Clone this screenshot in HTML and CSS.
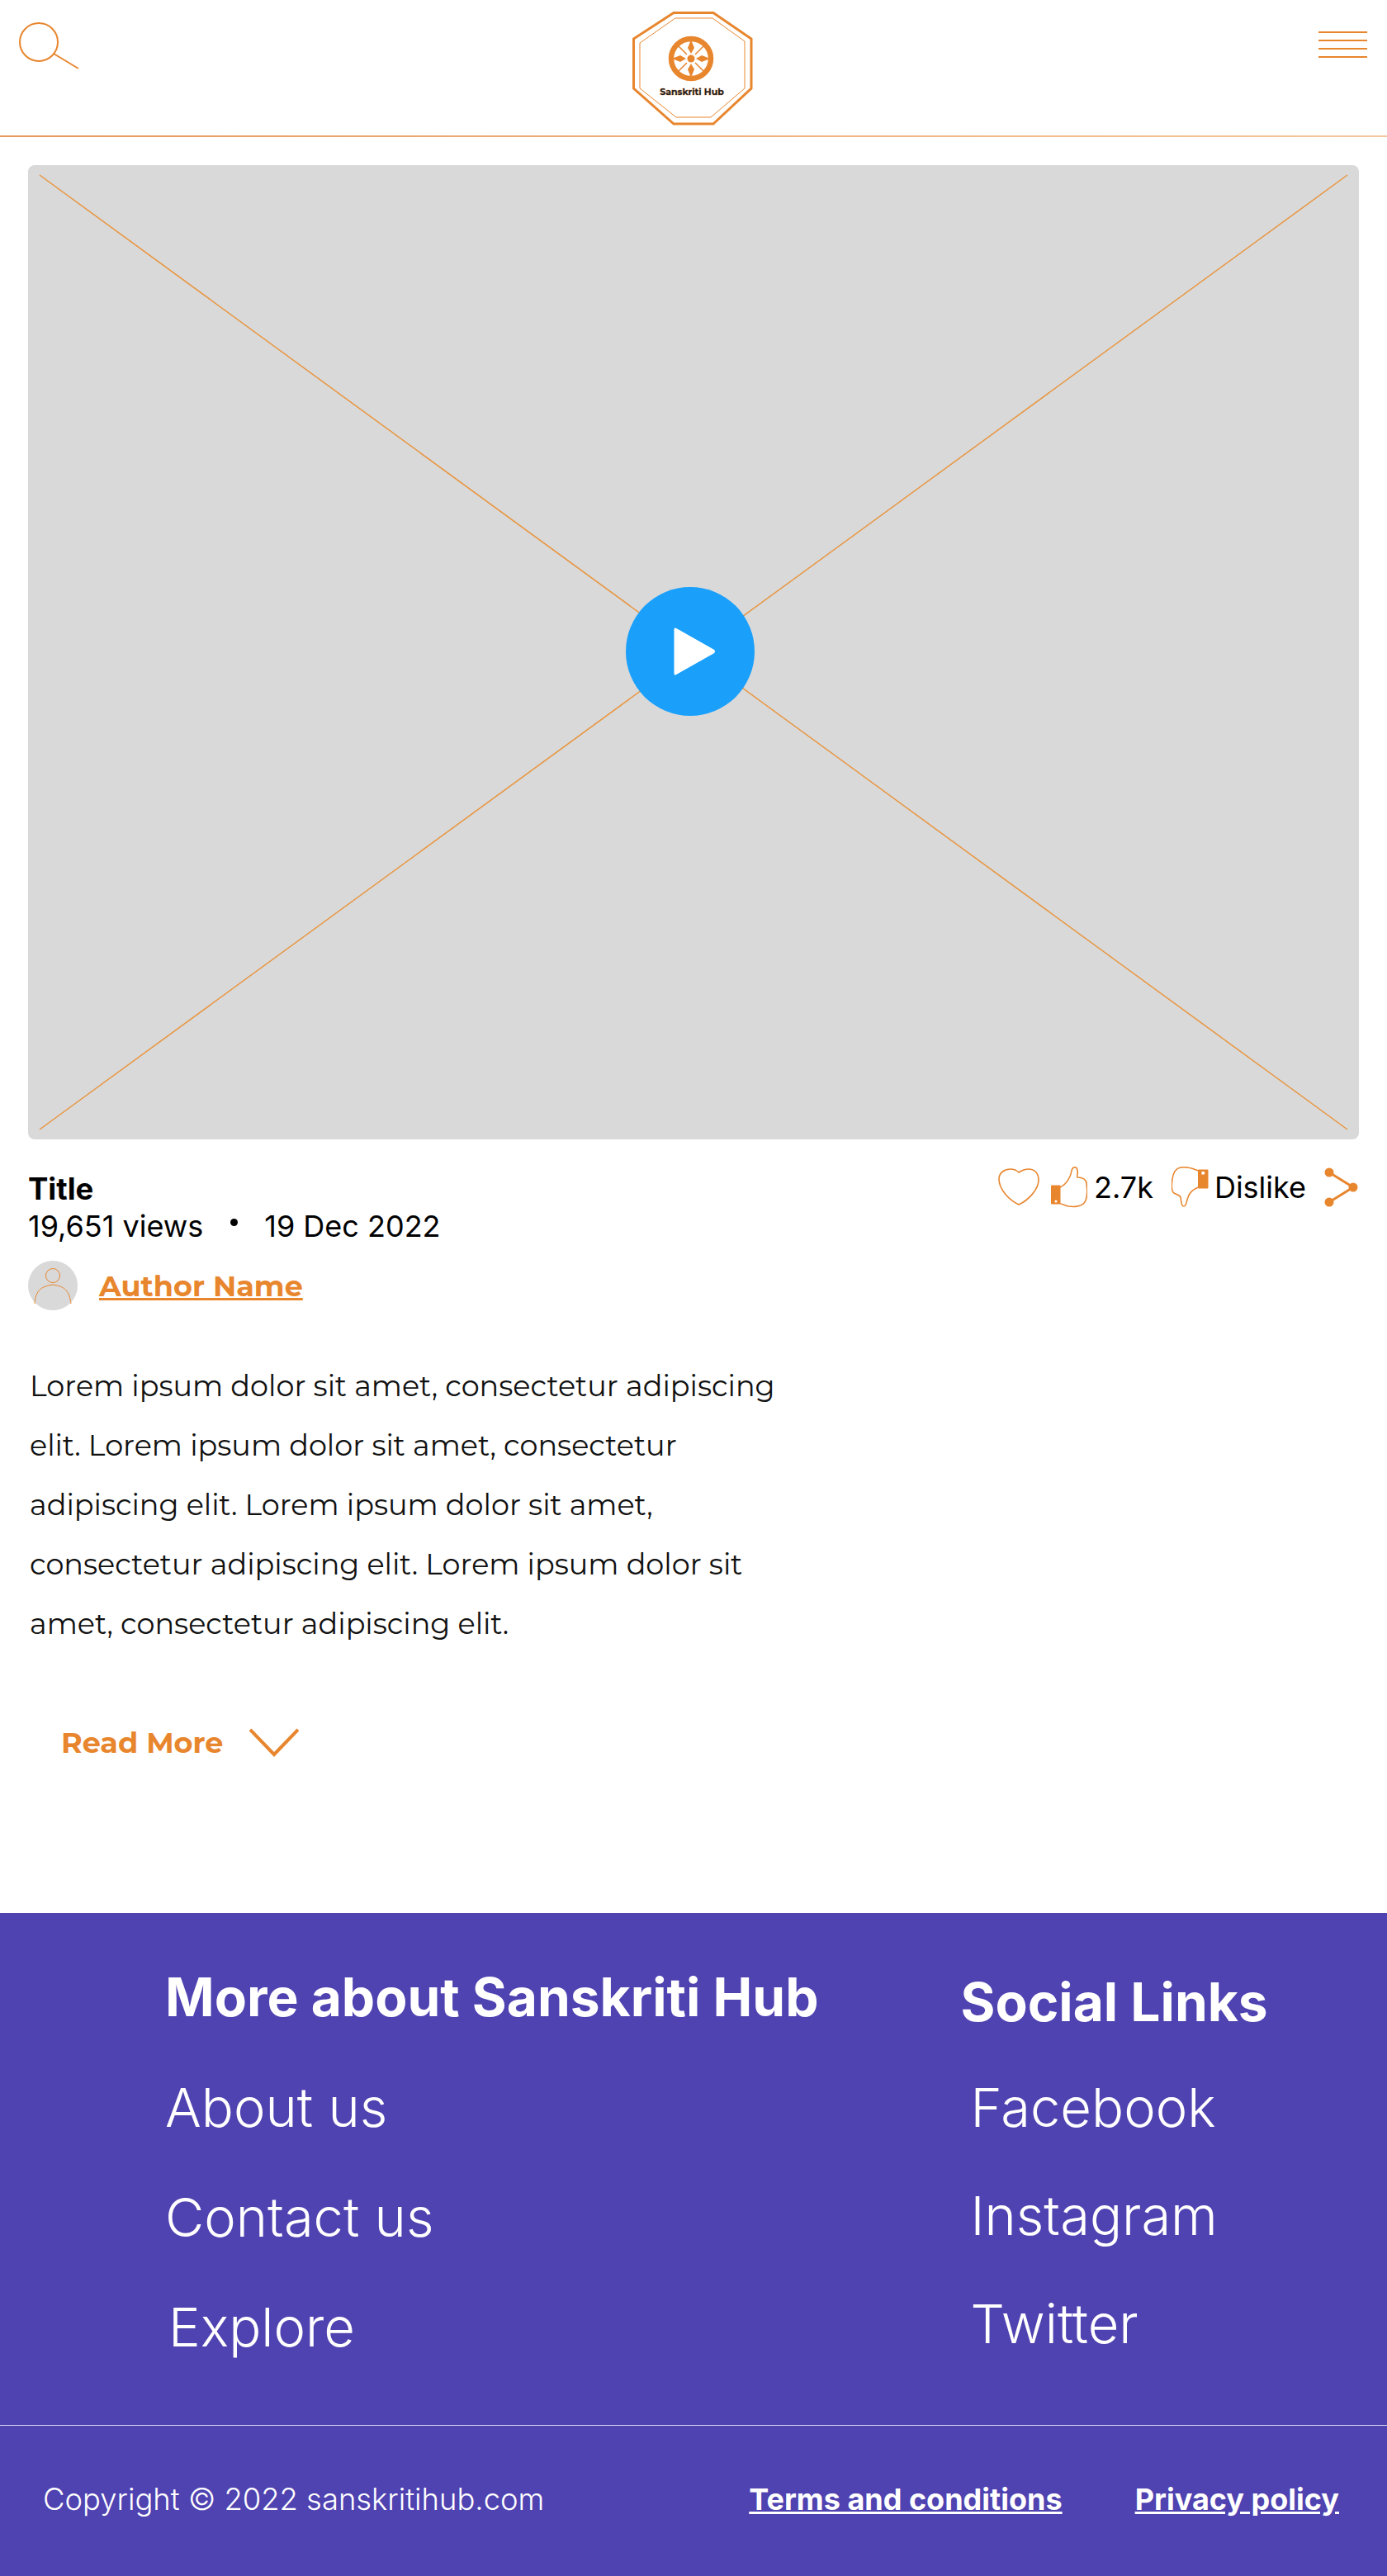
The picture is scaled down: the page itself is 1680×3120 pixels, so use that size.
FILE: index.html
```html
<!DOCTYPE html>
<html lang="en">
<head>
  <meta charset="UTF-8" />
  <meta name="viewport" content="width=device-width, initial-scale=1" />
  <title>Sanskriti Hub</title>
  <link rel="stylesheet" href="styles.css">
</head>
<body>
  <header class="site-header">
    <svg class="search-icon" viewBox="0 0 74 58" fill="none" stroke="#e8862e" stroke-width="2">
      <circle cx="24" cy="24" r="23" />
      <path d="M42 38 L72 56" />
    </svg>
    <svg class="logo" viewBox="0 0 146 138" fill="none" stroke="#e8862e">
      <path d="M50 1.5 H98 L144 33 V93 L98 136 H50 L1.5 93 V33 Z" stroke-width="3" />
      <path d="M52 8 H97 L136 36 V93 L95 128 H53 L9 93 V38 Z" stroke-width="1" />
      <circle cx="71" cy="57" r="24" stroke-width="6.5" />
      <circle cx="71" cy="57" r="4.5" fill="#e8862e" stroke="none" />
      <g fill="#e8862e" stroke="none">
        <path d="M71 34 L75 44 L71 51 L67 44 Z" />
        <path d="M71 80 L75 70 L71 63 L67 70 Z" />
        <path d="M48 57 L58 53 L65 57 L58 61 Z" />
        <path d="M94 57 L84 53 L77 57 L84 61 Z" />
      </g>
      <path d="M54 40 L66 52 M88 40 L76 52 M54 74 L66 62 M88 74 L76 62" stroke-width="1.5" />
      <text class="logo-text" x="72" y="101" text-anchor="middle">Sanskriti Hub</text>
    </svg>
    <div class="menu-icon">
      <span></span><span></span><span></span><span></span>
    </div>
  </header>

  <main class="content">
    <div class="video">
      <svg class="video-lines" viewBox="0 0 1612 1180" preserveAspectRatio="none" fill="none" stroke="#e8953f" stroke-width="1.5">
        <path d="M14 12 L1598 1168" />
        <path d="M1598 12 L14 1168" />
      </svg>
      <div class="play-button">
        <svg viewBox="0 0 52 60" width="52" height="60">
          <path d="M3 3 L49 29 Q50 30 49 31 L3 57 Z" fill="#fff" stroke="#fff" stroke-width="3" stroke-linejoin="round" />
        </svg>
      </div>
    </div>

    <div class="video-meta">
      <div class="video-info">
        <h1 class="video-title">Title</h1>
        <p class="video-stats">
          <span>19,651 views</span>
          <span class="dot"></span>
          <span>19 Dec 2022</span>
        </p>
        <div class="author">
          <svg class="avatar" viewBox="0 0 60 60" fill="none" stroke="#e8862e" stroke-width="1">
            <circle cx="30" cy="30" r="30" fill="#d9d9d9" stroke="none" />
            <circle cx="30" cy="18" r="8.5" />
            <path d="M8 52 C9 38 14 31 30 29 C46 31 50 38 52 52" />
          </svg>
          <a class="author-name" href="#">Author Name</a>
        </div>
      </div>
      <div class="video-actions">
        <svg class="icon-heart" viewBox="0 0 50 46" fill="none" stroke="#e8862e" stroke-width="1.6">
          <path d="M25 44 C14 39 1 26 1 13 C1 5 8 1 15 1 C19 1 23 3 25 5 C28 3 33 1 37 1 C44 1 49 6 49 14 C49 26 36 39 25 44 Z" />
        </svg>
        <svg class="icon-thumb" viewBox="0 0 44 50" fill="none">
          <path d="M0.5 23 H11 V45 H0.5 Z" fill="#e8862e" stroke="#e8862e" />
          <circle cx="6" cy="42" r="1.5" fill="#fff" />
          <path d="M11 25 C18 22 24 13 25 5 C26 0 31 -1 32 4 C33 8 31 10 32 13 C36 13 42 14 43 20 C44 27 44 36 42 41 C39 49 27 49 21 48 C17 47 14 45 11 45" stroke="#e8862e" stroke-width="1.6" />
        </svg>
        <span class="action-label like-label">2.7k</span>
        <svg class="icon-dislike" viewBox="0 0 46 50" fill="none">
          <path d="M32.5 4 H44 V26 H32.5 Z" fill="#e8862e" stroke="#e8862e" />
          <rect x="36.5" y="6" width="3.5" height="3.5" fill="#fff" />
          <path d="M32.5 5 C26 2 17 0 11 1 C5 2 2 8 1 15 C0 22 0 30 3 32 C6 34 10 34 11 37 C12 41 11 48 15 48 C18 48 18 42 20 37 C22 31 27 27 32.5 25" stroke="#e8862e" stroke-width="1.6" />
        </svg>
        <span class="action-label dislike-label">Dislike</span>
        <svg class="icon-share" viewBox="0 0 42 48" fill="none" stroke="#e8862e" stroke-width="3">
          <path d="M6 6 L35 24 L6 42" />
          <g fill="#e8862e" stroke="none">
            <circle cx="6" cy="6" r="5.5" />
            <circle cx="35" cy="24" r="5.5" />
            <circle cx="6" cy="42" r="5.5" />
          </g>
        </svg>
      </div>
    </div>

    <p class="description">Lorem ipsum dolor sit amet, consectetur adipiscing elit. Lorem ipsum dolor sit amet, consectetur adipiscing elit. Lorem ipsum dolor sit amet, consectetur adipiscing elit. Lorem ipsum dolor sit amet, consectetur adipiscing elit.</p>

    <a class="read-more" href="#">
      <span>Read More</span>
      <svg viewBox="0 0 60 36" width="60" height="36" fill="none" stroke="#e8862e" stroke-width="4">
        <path d="M1 2 L30 32 L59 2" />
      </svg>
    </a>
  </main>

  <footer class="site-footer">
    <div class="footer-links">
      <div class="footer-col">
        <h2>More about Sanskriti Hub</h2>
        <a href="#">About us</a>
        <a href="#">Contact us</a>
        <a href="#" class="explore">Explore</a>
      </div>
      <div class="footer-col social">
        <h2>Social Links</h2>
        <a href="#">Facebook</a>
        <a href="#">Instagram</a>
        <a href="#">Twitter</a>
      </div>
    </div>
    <div class="footer-bottom">
      <span class="copyright">Copyright © 2022 sanskritihub.com</span>
      <div class="legal">
        <a href="#">Terms and conditions</a>
        <a href="#">Privacy policy</a>
      </div>
    </div>
  </footer>
</body>
</html>
```

FILE: styles.css
```css
* {
  box-sizing: border-box;
}
body {
  margin: 0;
  height: 3120px;
  display: flex;
  flex-direction: column;
  background: white;
  color: #000;
  font-family: Inter, sans-serif;
}
a {
  color: inherit;
}

/* Header */
.site-header {
  height: 166px;
  flex-shrink: 0;
  display: flex;
  justify-content: space-between;
  align-items: flex-start;
  padding: 27px 24px 0 23px;
  border-bottom: 2px solid;
  border-image: linear-gradient(90deg, #e89a5c, #f5c79e) 1;
}
.search-icon {
  width: 74px;
  height: 58px;
}
.logo {
  width: 146px;
  height: 138px;
  margin-top: -13px;
  margin-left: -16px;
}
.logo-text {
  font-family: Montserrat, "Open Sans", sans-serif;
  font-size: 11px;
  font-weight: 700;
  fill: #222;
  stroke: #e8862e;
  stroke-width: 0.5;
  paint-order: stroke;
}
.menu-icon {
  width: 59px;
  margin-top: 11px;
  display: flex;
  flex-direction: column;
  gap: 8px;
}
.menu-icon span {
  height: 2px;
  background: #e8862e;
}

/* Video */
.content {
  flex: 1;
  padding: 34px 34px 0;
}
.video {
  position: relative;
  height: 1180px;
  background: #d9d9d9;
  border-radius: 8px;
}
.video-lines {
  width: 100%;
  height: 100%;
  display: block;
}
.play-button {
  position: absolute;
  left: 724px;
  top: 511px;
  width: 156px;
  height: 156px;
  border-radius: 50%;
  background: #1aa0fb;
  display: flex;
  align-items: center;
  justify-content: center;
  padding-left: 10px;
}

/* Info row */
.video-meta {
  display: flex;
  justify-content: space-between;
  align-items: flex-start;
  margin-top: 40px;
}
.video-title {
  margin: 0;
  font-size: 36.5px;
  font-weight: 700;
  line-height: 40px;
}
.video-stats {
  margin: 3px 0 0;
  font-size: 36px;
  line-height: 44px;
  display: flex;
  align-items: center;
}
.dot {
  width: 9px;
  height: 9px;
  border-radius: 50%;
  background: #000;
  margin: -10px 32px 0 33px;
}
.author {
  display: flex;
  align-items: center;
  gap: 26px;
  margin-top: 20px;
}
.avatar {
  width: 60px;
  height: 60px;
}
.author-name {
  color: #e8862e;
  font-family: Montserrat, "Open Sans", sans-serif;
  font-size: 35px;
  font-weight: 700;
}
.video-actions {
  display: flex;
  align-items: center;
  margin-top: -7px;
}
.icon-heart {
  width: 50px;
  height: 46px;
}
.icon-thumb {
  width: 44px;
  height: 50px;
  margin-left: 14px;
}
.action-label {
  font-size: 36px;
}
.like-label {
  margin-left: 8px;
}
.icon-dislike {
  width: 46px;
  height: 50px;
  margin-left: 22px;
}
.dislike-label {
  margin-left: 6px;
}
.icon-share {
  width: 42px;
  height: 48px;
  margin-left: 22px;
}

/* Description */
.description {
  width: 930px;
  margin: 56px 0 0 2px;
  font-family: Montserrat, "Open Sans", sans-serif;
  font-size: 35px;
  line-height: 72px;
  font-weight: 400;
  color: #111;
}
.read-more {
  display: inline-flex;
  align-items: center;
  gap: 32px;
  margin: 86px 0 0 40px;
  color: #e8862e;
  font-family: Montserrat, "Open Sans", sans-serif;
  font-size: 35px;
  font-weight: 700;
  text-decoration: none;
}

/* Footer */
.site-footer {
  height: 803px;
  flex-shrink: 0;
  background: #4f42b1;
  color: white;
  display: flex;
  flex-direction: column;
}
.footer-links {
  height: 620px;
  display: flex;
  padding: 64px 0 0 200px;
  gap: 172px;
}
.footer-col {
  display: flex;
  flex-direction: column;
  align-items: flex-start;
}
.footer-col h2 {
  margin: 0 0 58px;
  font-size: 64px;
  font-weight: 700;
  line-height: 76px;
}
.footer-col a {
  font-size: 65px;
  font-weight: 300;
  line-height: 76px;
  margin-bottom: 57px;
  text-decoration: none;
}
.explore {
  margin-left: 4px;
}
.footer-col.social h2 {
  margin: 6px 0 52px;
}
.footer-col.social a {
  margin-left: 12px;
  margin-bottom: 55px;
}
.footer-bottom {
  flex: 1;
  border-top: 1px solid #dcd9f2;
  display: flex;
  justify-content: space-between;
  align-items: center;
  padding: 0 58px 4px 52px;
  font-size: 36.4px;
}
.copyright {
  font-weight: 300;
}
.legal {
  display: flex;
  gap: 88px;
  font-size: 36px;
  font-weight: 700;
}
```
